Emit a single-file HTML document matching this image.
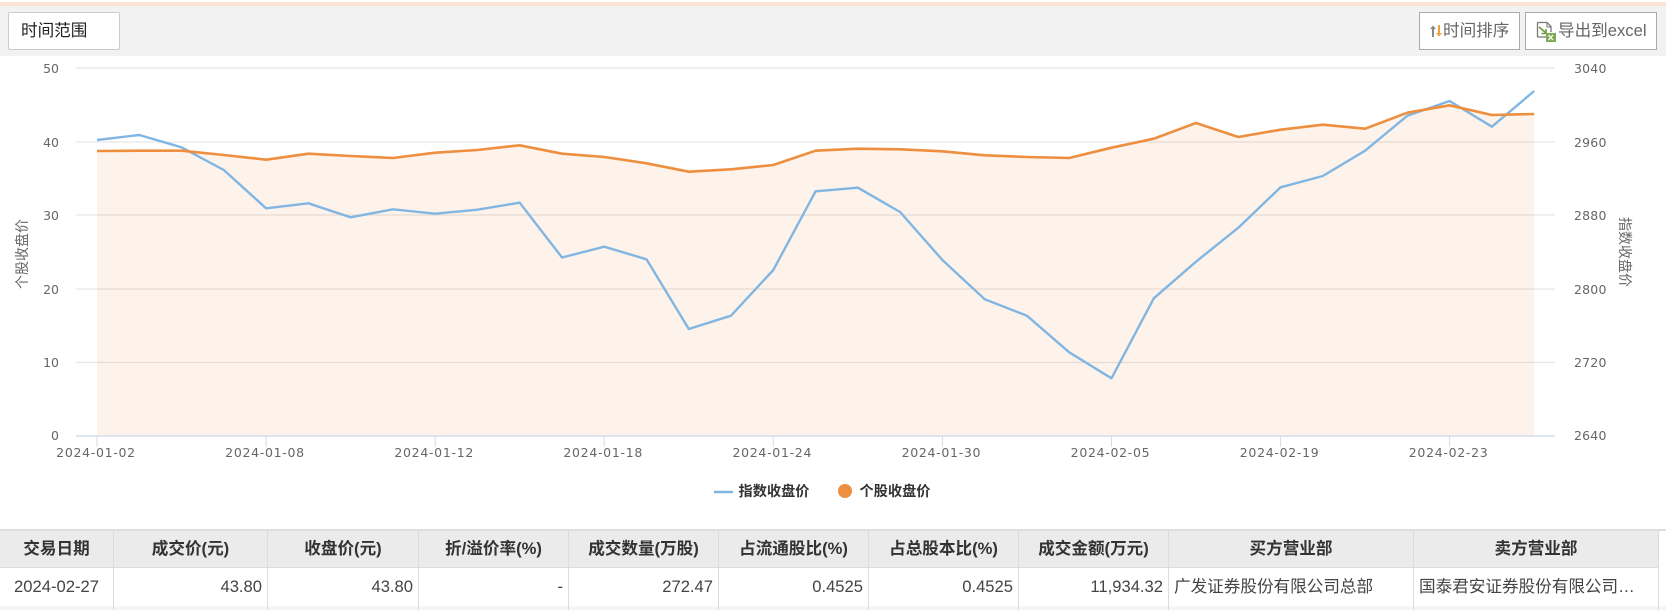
<!DOCTYPE html>
<html lang="zh-CN">
<head>
<meta charset="utf-8">
<title>时间范围</title>
<style>
html,body{margin:0;padding:0;background:#fff;}
body{width:1666px;height:610px;overflow:hidden;position:relative;font-family:"Liberation Sans","Noto Sans CJK SC",sans-serif;color:#333;}
.strip{position:absolute;left:0;top:2px;width:1666px;height:4px;background:#fbe4d3;}
.bar{position:absolute;left:0;top:6px;width:1666px;height:50px;background:#f2f2f2;}
.sel{position:absolute;left:8px;top:12px;width:110px;height:36px;background:#fff;border:1px solid #ccc;border-radius:2px;font-size:16.6px;line-height:36px;text-indent:12px;color:#222;}
.btn{position:absolute;top:12px;height:36px;background:#fff;border:1px solid #aaa;font-size:16.6px;line-height:36px;color:#666;box-sizing:content-box;white-space:nowrap;}
.btn span{position:absolute;top:0;}
.btn svg{position:absolute;}
svg.chart{position:absolute;left:0;top:0;}
.tb{position:absolute;left:0;top:529px;width:1666px;height:81px;overflow:hidden;border-top:2px solid #ddd;box-sizing:border-box;}
.cell{position:absolute;box-sizing:border-box;border-right:1px solid #dcdcdc;white-space:nowrap;overflow:hidden;}
.h{top:0;height:37px;line-height:35px;background:#ebebeb;font-weight:bold;font-size:16.6px;text-align:center;color:#333;border-bottom:1px solid #dcdcdc;}
.d{top:37px;height:38px;line-height:38px;font-size:16.6px;color:#444;padding:0 5px;background:#fff;text-align:right;}
.e{top:75px;height:6px;background:#f5f5f5;}
</style>
</head>
<body>
<div class="strip"></div>
<div class="bar"></div>
<div class="sel">时间范围</div>
<div class="btn" style="left:1419px;width:99px;">
<svg style="left:9px;top:11px" width="14" height="14" viewBox="0 0 14 14"><path d="M4 13V3" stroke="#888" stroke-width="2" fill="none"/><path d="M1 5L4 1.5L7 5z" fill="#888"/><path d="M10 1v9" stroke="#f0a040" stroke-width="2" fill="none"/><path d="M7 9L10 12.5L13 9z" fill="#f0a040"/></svg>
<span style="left:23px">时间排序</span></div>
<div class="btn" style="left:1525px;width:130px;">
<svg style="left:9px;top:8px" width="22" height="22" viewBox="0 0 22 22"><path d="M14 16H3.5a1 1 0 0 1-1-1V2.5a1 1 0 0 1 1-1H12l4 4V11" fill="none" stroke="#777" stroke-width="1.3"/><path d="M12 1.500V6h4" fill="none" stroke="#777" stroke-width="1"/><path d="M4 6l7 6M11 8v4.500H6.500" fill="none" stroke="#6d9b3f" stroke-width="1.6"/><rect x="11" y="12" width="10" height="9" fill="#7fab55"/><path d="M13.500 14l4.500 5M18 14l-4.500 5" stroke="#fff" stroke-width="1.300"/></svg>
<span style="left:32px;">导出到excel</span></div>

<svg class="chart" width="1666" height="530" viewBox="0 0 1666 530">
<g stroke="#e6e6e6" stroke-width="1.300" fill="none">
<path d="M76 68H1555M76 142H1555M76 215H1555M76 289H1555M76 362.500H1555"/>
</g>
<path fill="#ed8f3f" fill-opacity=".105" d="M97 151L139.300 150.700L181.500 150.700L223.800 155L266.100 159.700L308.400 153.700L350.600 156L392.900 158L435.200 152.700L477.400 150L519.700 145.300L562 153.700L604.200 157L646.500 163.300L688.800 171.700L731 169.300L773.300 165L815.600 150.700L857.900 148.700L900.100 149.300L942.400 151.300L984.700 155.300L1026.900 157L1069.200 158L1111.500 147.700L1153.800 138.700L1196 123L1238.300 137L1280.600 129.700L1322.800 124.700L1365.100 128.700L1407.400 112.700L1449.600 105.300L1491.900 115L1534.200 114V436H97Z"/>
<path fill="none" stroke="#82b6e2" stroke-width="2.400" stroke-linejoin="round" d="M97 140L139.300 135L181.500 147.300L223.800 170L266.100 208.300L308.400 203.300L350.600 217.300L392.900 209.300L435.200 213.700L477.400 209.700L519.700 202.700L562 257.500L604.200 246.700L646.500 259.300L688.800 329L731 315.700L773.300 270L815.600 191.300L857.900 187.700L900.100 212L942.400 260L984.700 299.300L1026.900 315.700L1069.200 352.300L1111.500 378.300L1153.800 298.300L1196 261.700L1238.300 227.700L1280.600 187.300L1322.800 176L1365.100 150.700L1407.400 115.700L1449.600 101L1491.900 126.700L1534.200 91"/>
<path fill="none" stroke="#ed8f3f" stroke-width="2.600" stroke-linejoin="round" d="M97 151L139.300 150.700L181.500 150.700L223.800 155L266.100 159.700L308.400 153.700L350.600 156L392.900 158L435.200 152.700L477.400 150L519.700 145.300L562 153.700L604.200 157L646.500 163.300L688.800 171.700L731 169.300L773.300 165L815.600 150.700L857.900 148.700L900.100 149.300L942.400 151.300L984.700 155.300L1026.900 157L1069.200 158L1111.500 147.700L1153.800 138.700L1196 123L1238.300 137L1280.600 129.700L1322.800 124.700L1365.100 128.700L1407.400 112.700L1449.600 105.300L1491.900 115L1534.200 114"/>
<path fill="none" stroke="#d3dcee" stroke-width="1.500" d="M76 436H1555"/>
<path fill="none" stroke="#d3dcee" stroke-width="1" d="M97 436v11M266.100 436v11M435.200 436v11M604.200 436v11M773.300 436v11M942.400 436v11M1111.500 436v11M1280.600 436v11M1449.600 436v11"/>

<g font-family="'DejaVu Sans',sans-serif" font-size="12.500" fill="#666" text-anchor="end">
<text x="59" y="73">50</text><text x="59" y="147">40</text><text x="59" y="220">30</text><text x="59" y="294">20</text><text x="59" y="367">10</text><text x="59" y="440">0</text>
</g>
<g font-family="'DejaVu Sans',sans-serif" font-size="12.500" fill="#666" letter-spacing=".2">
<text x="1574" y="73">3040</text><text x="1574" y="147">2960</text><text x="1574" y="220">2880</text><text x="1574" y="294">2800</text><text x="1574" y="367">2720</text><text x="1574" y="440">2640</text>
</g>
<g font-family="'DejaVu Sans',sans-serif" font-size="12.500" fill="#666" text-anchor="middle" letter-spacing=".7">
<text x="96" y="457">2024-01-02</text><text x="265" y="457">2024-01-08</text><text x="434.200" y="457">2024-01-12</text><text x="603.200" y="457">2024-01-18</text><text x="772.300" y="457">2024-01-24</text><text x="941.400" y="457">2024-01-30</text><text x="1110.500" y="457">2024-02-05</text><text x="1279.600" y="457">2024-02-19</text><text x="1448.600" y="457">2024-02-23</text>
</g>
<g font-family="'Noto Sans CJK SC',sans-serif" font-size="14" fill="#666" text-anchor="middle">
<text transform="translate(27 254) rotate(-90)">个股收盘价</text>
<text transform="translate(1620 252) rotate(90)">指数收盘价</text>
</g>
<path d="M714 492H733" stroke="#82b6e2" stroke-width="2.500"/>
<circle cx="845" cy="491" r="7" fill="#ed8f3f"/>
<g font-family="'Noto Sans CJK SC',sans-serif" font-size="14.200" font-weight="bold" fill="#333">
<text x="738.500" y="496">指数收盘价</text><text x="859.500" y="496">个股收盘价</text>
</g>
</svg>

<div class="tb">
<div class="cell h" style="left:0;width:114px">交易日期</div>
<div class="cell h" style="left:114px;width:154px">成交价(元)</div>
<div class="cell h" style="left:268px;width:151px">收盘价(元)</div>
<div class="cell h" style="left:419px;width:150px">折/溢价率(%)</div>
<div class="cell h" style="left:569px;width:150px">成交数量(万股)</div>
<div class="cell h" style="left:719px;width:150px">占流通股比(%)</div>
<div class="cell h" style="left:869px;width:150px">占总股本比(%)</div>
<div class="cell h" style="left:1019px;width:150px">成交金额(万元)</div>
<div class="cell h" style="left:1169px;width:245px">买方营业部</div>
<div class="cell h" style="left:1414px;width:245px">卖方营业部</div>

<div class="cell d" style="left:0;width:114px;text-align:center;padding:0">2024-02-27</div>
<div class="cell d" style="left:114px;width:154px">43.80</div>
<div class="cell d" style="left:268px;width:151px">43.80</div>
<div class="cell d" style="left:419px;width:150px">-</div>
<div class="cell d" style="left:569px;width:150px">272.47</div>
<div class="cell d" style="left:719px;width:150px">0.4525</div>
<div class="cell d" style="left:869px;width:150px">0.4525</div>
<div class="cell d" style="left:1019px;width:150px">11,934.32</div>
<div class="cell d" style="left:1169px;width:245px;text-align:left">广发证券股份有限公司总部</div>
<div class="cell d" style="left:1414px;width:245px;text-align:left">国泰君安证券股份有限公司…</div>

<div class="cell e" style="left:0;width:114px"></div>
<div class="cell e" style="left:114px;width:154px"></div>
<div class="cell e" style="left:268px;width:151px"></div>
<div class="cell e" style="left:419px;width:150px"></div>
<div class="cell e" style="left:569px;width:150px"></div>
<div class="cell e" style="left:719px;width:150px"></div>
<div class="cell e" style="left:869px;width:150px"></div>
<div class="cell e" style="left:1019px;width:150px"></div>
<div class="cell e" style="left:1169px;width:245px"></div>
<div class="cell e" style="left:1414px;width:245px"></div>
<div class="cell e" style="left:1659px;width:7px;border:0"></div>
</div>
</body>
</html>
